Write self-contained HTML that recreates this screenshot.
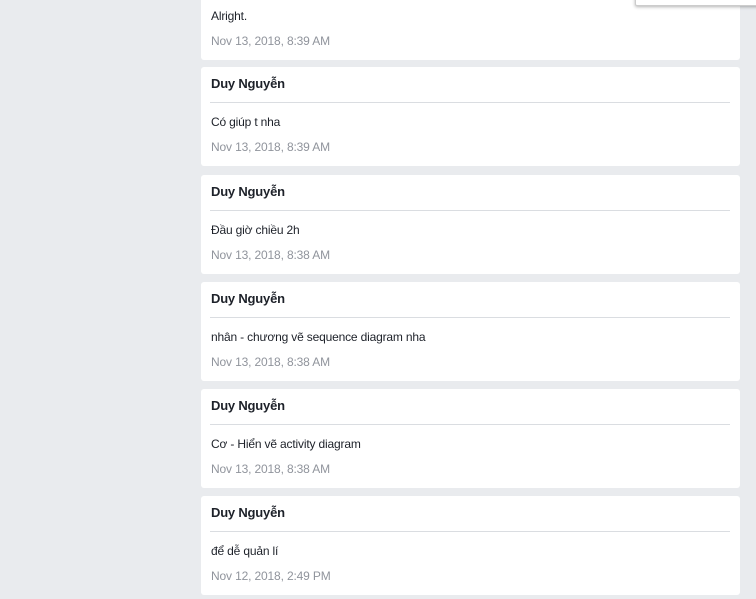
<!DOCTYPE html>
<html><head><meta charset="utf-8"><style>
body{margin:0;background:#e9ebee;width:756px;height:599px;overflow:hidden;position:relative;font-family:"Liberation Sans",Arial,sans-serif;}
.card{position:absolute;left:201px;width:539px;height:99px;background:#fff;border-radius:3px;}
.name{position:absolute;left:10px;top:8px;font-size:13px;font-weight:bold;color:#1d2129;line-height:18px;letter-spacing:-0.2px;}
.hr{position:absolute;left:9px;right:10px;top:35px;height:1px;background:#dadde1;}
.msg{position:absolute;left:10px;top:47px;font-size:12px;color:#1d2129;line-height:16px;letter-spacing:-0.17px;}
.date{position:absolute;left:10px;top:72px;font-size:12px;color:#90949c;line-height:16px;letter-spacing:-0.15px;}
.dd{position:absolute;left:635px;top:-10px;width:140px;height:14px;background:#fff;border:1px solid #ccc;box-shadow:0 1px 3px rgba(0,0,0,.3);border-radius:2px;}
</style></head><body>
<div class="card" style="top:-39px"><div class="msg">Alright.</div><div class="date">Nov 13, 2018, 8:39 AM</div></div>
<div class="card" style="top:67px"><div class="name">Duy Nguyễn</div><div class="hr"></div><div class="msg">Có giúp t nha</div><div class="date">Nov 13, 2018, 8:39 AM</div></div>
<div class="card" style="top:175px"><div class="name">Duy Nguyễn</div><div class="hr"></div><div class="msg">Đầu giờ chiều 2h</div><div class="date">Nov 13, 2018, 8:38 AM</div></div>
<div class="card" style="top:282px"><div class="name">Duy Nguyễn</div><div class="hr"></div><div class="msg">nhân - chương vẽ sequence diagram nha</div><div class="date">Nov 13, 2018, 8:38 AM</div></div>
<div class="card" style="top:389px"><div class="name">Duy Nguyễn</div><div class="hr"></div><div class="msg">Cơ - Hiển vẽ activity diagram</div><div class="date">Nov 13, 2018, 8:38 AM</div></div>
<div class="card" style="top:496px"><div class="name">Duy Nguyễn</div><div class="hr"></div><div class="msg">để dễ quản lí</div><div class="date">Nov 12, 2018, 2:49 PM</div></div>
<div class="dd"></div>
</body></html>
